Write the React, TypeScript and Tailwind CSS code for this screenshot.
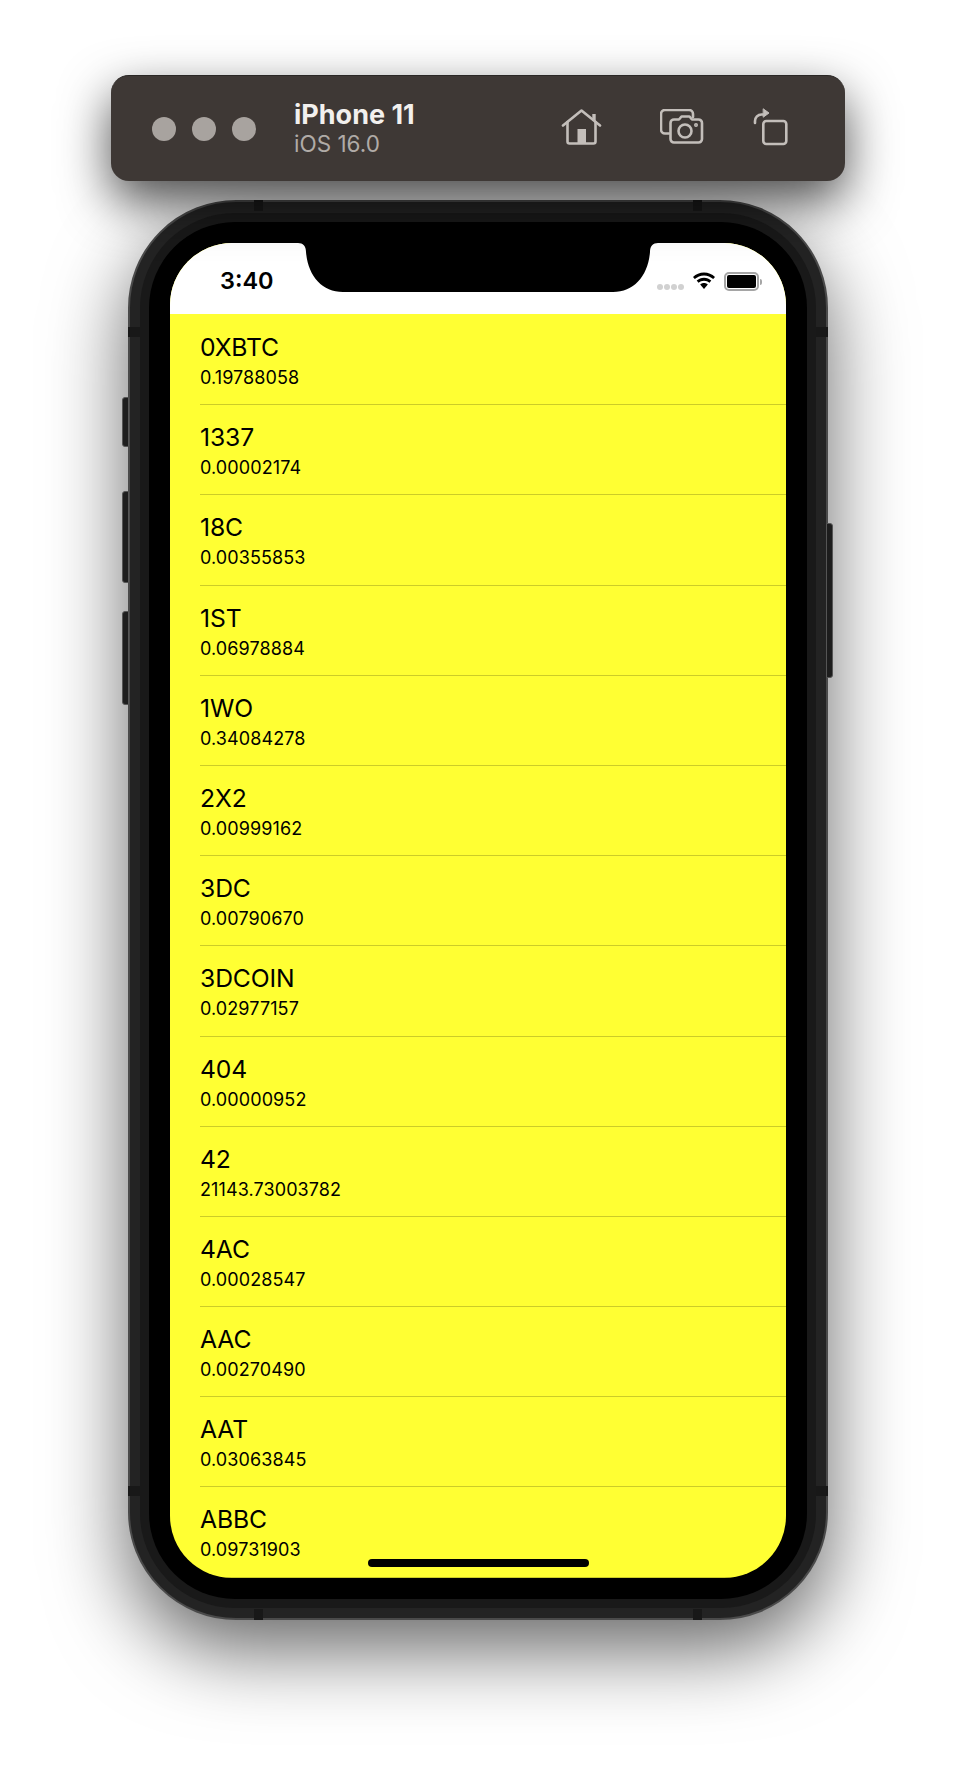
const font = { fontFamily: "Inter, 'Liberation Sans', sans-serif" };

const rows = [
  ["0XBTC", "0.19788058"],
  ["1337", "0.00002174"],
  ["18C", "0.00355853"],
  ["1ST", "0.06978884"],
  ["1WO", "0.34084278"],
  ["2X2", "0.00999162"],
  ["3DC", "0.00790670"],
  ["3DCOIN", "0.02977157"],
  ["404", "0.00000952"],
  ["42", "21143.73003782"],
  ["4AC", "0.00028547"],
  ["AAC", "0.00270490"],
  ["AAT", "0.03063845"],
  ["ABBC", "0.09731903"],
];

function HomeIcon() {
  return (
    <svg width="42" height="36" viewBox="0 0 42 36" fill="none" stroke="#c3beba" strokeWidth="2.6" strokeLinecap="round" strokeLinejoin="round">
      <path d="M2 16.5 20.500 1.500l18.500 15" />
      <path d="M33 12V5" strokeWidth="3.400" strokeLinecap="butt" />
      <path d="M6.500 13v19.500a2 2 0 0 0 2 2h24a2 2 0 0 0 2-2V13" />
      <rect x="16.500" y="20" width="8.500" height="14" fill="#c3beba" stroke="none" />
    </svg>
  );
}

function CameraIcon() {
  return (
    <svg width="44" height="36" viewBox="0 0 44 36" fill="none" stroke="#c3beba" strokeWidth="2.6" strokeLinecap="round" strokeLinejoin="round">
      <path d="M9 24.500H5a4 4 0 0 1-4-4V5a4 4 0 0 1 4-4h24a4 4 0 0 1 4 4v3" />
      <path d="M10.500 14a3.500 3.500 0 0 1 3.500-3.500h5l2.500-3h8l2.500 3h6.500a3.500 3.500 0 0 1 3.500 3.500v16a3.500 3.500 0 0 1-3.500 3.500H14a3.500 3.500 0 0 1-3.500-3.500z" />
      <circle cx="25" cy="22" r="6.500" />
      <circle cx="36" cy="16" r="0.700" fill="#c3beba" />
    </svg>
  );
}

function RotateIcon() {
  return (
    <svg width="36" height="38" viewBox="0 0 36 38" fill="none" stroke="#c3beba" strokeWidth="2.6" strokeLinecap="round" strokeLinejoin="round">
      <rect x="10.300" y="13" width="23" height="23" rx="3" />
      <path d="M2 15v-2a6.500 6.500 0 0 1 6.500-6.500h2" />
      <path d="M10.500 1l5.500 4-5.500 4z" fill="#c3beba" strokeWidth="1" />
    </svg>
  );
}

function WifiIcon() {
  return (
    <svg width="24" height="19" viewBox="0 0 24 19" fill="#000">
      <path d="M12 3.400c3.600 0 6.800 1.400 9.200 3.700l1.800-2.200C20.100 2.100 16.200.400 12 .400S3.900 2.100 1 4.900l1.800 2.200C5.200 4.800 8.400 3.400 12 3.400z" />
      <path d="M12 8.700c2.100 0 4 .800 5.500 2.100l1.800-2.200C17.300 6.800 14.800 5.700 12 5.700S6.700 6.800 4.700 8.600l1.800 2.200C8 9.500 9.900 8.700 12 8.700z" />
      <path d="M12 11c-1.500 0-2.800.600-3.800 1.400l3.800 4.600 3.800-4.600C14.800 11.600 13.500 11 12 11z" />
    </svg>
  );
}

function NotchShape() {
  return (
    <svg width="360" height="50" viewBox="0 0 360 50" fill="#000">
      <path d="M0 0h360c-5 0-8 3-8 9-2 24-16 40-37 40H45C24 49 10 33 8 9 8 3 5 0 0 0z" />
    </svg>
  );
}

function SideButton({ className }: { className: string }) {
  return <div className={`absolute bg-[#1d1d1d] border border-[#555] ${className}`} />;
}

export default function App() {
  return (
    <div className="w-[956px] h-[1770px] bg-white flex flex-col items-center overflow-hidden" style={font}>
      {/* simulator title bar */}
      <div className="relative z-10 mt-[75px] w-[734px] h-[106px] shrink-0 rounded-[18px] bg-[#3e3835] border-t border-[#2a2725] flex items-center pl-[41px] shadow-[0_20px_50px_rgba(0,0,0,0.7)]">
        <div className="flex gap-[16px]">
          <div className="w-[24px] h-[24px] rounded-full bg-[#a8a39f]" />
          <div className="w-[24px] h-[24px] rounded-full bg-[#a8a39f]" />
          <div className="w-[24px] h-[24px] rounded-full bg-[#a8a39f]" />
        </div>
        <div className="ml-[38px] flex flex-col">
          <span className="text-[27px] leading-[30px] font-bold text-[#f2f0ee]">iPhone 11</span>
          <span className="text-[22.5px] leading-[27px] text-[#b0aba7]">iOS 16.0</span>
        </div>
        <div className="ml-auto mr-[56px] flex items-center mt-[-4px]">
          <HomeIcon />
          <div className="ml-[57px]">
            <CameraIcon />
          </div>
          <div className="ml-[49px]">
            <RotateIcon />
          </div>
        </div>
      </div>

      {/* phone */}
      <div className="relative mt-[19px] w-[700px] h-[1420px] shrink-0 rounded-[108px] bg-[#232323] border-2 border-[#4a4a4a] p-[19px] pt-[20px] shadow-[0_30px_80px_rgba(0,0,0,0.6)]">
        <SideButton className="left-[-8px] top-[195px] w-[7px] h-[50px] rounded-l-[3px]" />
        <SideButton className="left-[-8px] top-[289px] w-[7px] h-[92px] rounded-l-[3px]" />
        <SideButton className="left-[-8px] top-[409px] w-[7px] h-[94px] rounded-l-[3px]" />
        <SideButton className="right-[-7px] top-[321px] w-[7px] h-[155px] rounded-r-[3px]" />

        <div className="absolute left-[124px] top-[-2px] w-[9px] h-[11px] bg-[#181818]" />
        <div className="absolute right-[124px] top-[-2px] w-[9px] h-[11px] bg-[#181818]" />
        <div className="absolute left-[124px] bottom-[-2px] w-[9px] h-[11px] bg-[#181818]" />
        <div className="absolute right-[124px] bottom-[-2px] w-[9px] h-[11px] bg-[#181818]" />
        <div className="absolute left-[-2px] top-[125px] w-[12px] h-[10px] bg-[#181818]" />
        <div className="absolute right-[-2px] top-[125px] w-[12px] h-[10px] bg-[#181818]" />
        <div className="absolute left-[-2px] bottom-[122px] w-[12px] h-[10px] bg-[#181818]" />
        <div className="absolute right-[-2px] bottom-[122px] w-[12px] h-[10px] bg-[#181818]" />

        <div className="relative w-full h-full rounded-[86px] bg-black p-[21px] shadow-[0_0_0_9px_#191919]">
          <div className="relative w-full h-full rounded-[62px] overflow-hidden bg-[#ffff33]">
            <div className="h-[71px] bg-white flex items-start justify-between pl-[50px] pr-[24px] pt-[24px]">
              <span className="text-[23.5px] leading-[28px] font-semibold text-black">3:40</span>
              <div className="flex items-center gap-[8px] pt-[5px]">
                <div className="flex gap-[1px] mt-[11px]">
                  <div className="w-[6px] h-[6px] rounded-full bg-[#d1d1d1]" />
                  <div className="w-[6px] h-[6px] rounded-full bg-[#d1d1d1]" />
                  <div className="w-[6px] h-[6px] rounded-full bg-[#d1d1d1]" />
                  <div className="w-[6px] h-[6px] rounded-full bg-[#d1d1d1]" />
                </div>
                <WifiIcon />
                <div className="flex items-center gap-[1px]">
                  <div className="w-[35px] h-[19px] rounded-[5px] border-2 border-[#a5a5a5] p-[1px]">
                    <div className="w-full h-full rounded-[2px] bg-black" />
                  </div>
                  <div className="w-[2px] h-[6px] rounded-r-[2px] bg-[#a5a5a5]" />
                </div>
              </div>
            </div>
            <div className="absolute top-0 left-[128px]">
              <NotchShape />
            </div>

            <div className="pt-[1px]">
              {rows.map(([name, value]) => (
                <div key={name} className="h-[90.2px] pl-[30px]">
                  <div className="h-full flex flex-col border-b border-black/20 pt-[16px]">
                    <span className="text-[24.7px] leading-[32px] tracking-[-0.1px] text-black">{name}</span>
                    <span className="text-[18px] leading-[24px] mt-[3px] tracking-[0.1px] text-black">{value}</span>
                  </div>
                </div>
              ))}
            </div>

            <div className="absolute bottom-[11px] left-[198px] w-[221px] h-[8px] rounded-full bg-black" />
          </div>
        </div>
      </div>
    </div>
  );
}
